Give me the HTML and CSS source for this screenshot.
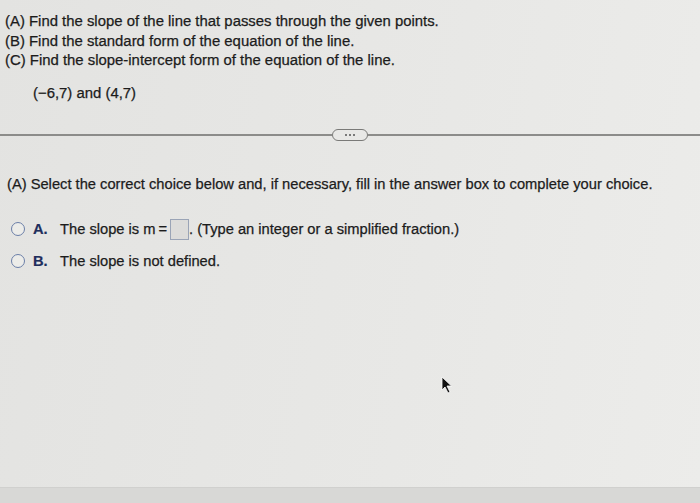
FILE: index.html
```html
<!DOCTYPE html>
<html>
<head>
<meta charset="utf-8">
<link rel="stylesheet" href="styles.css">
</head>
<body>
<div class="page">
  <div class="question">
    <div class="q-line">(A) Find the slope of the line that passes through the given points.</div>
    <div class="q-line">(B) Find the standard form of the equation of the line.</div>
    <div class="q-line">(C) Find the slope-intercept form of the equation of the line.</div>
    <div class="points">(&#8722;6,7) and (4,7)</div>
  </div>
  <div class="divider">
    <span class="rule"></span>
    <span class="pill"><i></i><i></i><i></i></span>
    <span class="rule"></span>
  </div>
  <div class="answer">
    <div class="prompt">(A) Select the correct choice below and, if necessary, fill in the answer box to complete your choice.</div>
    <div class="choices">
      <div class="choice">
        <span class="radio"></span>
        <span class="letter">A.</span>
        <span class="text">The slope is m&#8201;=&#8201;<span class="box"></span>. (Type an integer or a simplified fraction.)</span>
      </div>
      <div class="choice">
        <span class="radio"></span>
        <span class="letter">B.</span>
        <span class="text">The slope is not defined.</span>
      </div>
    </div>
  </div>
  <div class="spacer">
    <svg class="cursor" width="12" height="18" viewBox="0 0 12 18"><path d="M1 1 L1 14 L4 11 L7 17 L9 16 L6 10 L10.5 10 Z" fill="#111" stroke="#fff" stroke-width="0.8"/></svg>
  </div>
  <div class="bottom"></div>
</div>
</body>
</html>
```
FILE: styles.css
```css
html, body {
  margin: 0;
  padding: 0;
}
body {
  width: 700px;
  height: 503px;
  overflow: hidden;
  background: #e5e5e3;
  font-family: "Liberation Sans", Arial, sans-serif;
  color: #1c1c1c;
  -webkit-text-stroke: 0.25px #1c1c1c;
}
.page {
  height: 503px;
  display: flex;
  flex-direction: column;
  background: linear-gradient(100deg, #e3e3e1 0%, #e8e8e6 60%, #ececea 100%);
}
.question {
  padding: 12px 0 0 5px;
  font-size: 14.9px;
  line-height: 19.5px;
}
.points {
  margin: 13px 0 0 28px;
}
.divider {
  margin-top: 26px;
  display: flex;
  align-items: center;
  height: 12px;
}
.rule {
  flex: 1;
  height: 1.5px;
  background: #8c8c8a;
}
.pill {
  width: 34px;
  height: 10px;
  border: 1.5px solid #7a7a78;
  border-radius: 6px;
  display: flex;
  justify-content: center;
  align-items: center;
  gap: 2px;
  background: #e8e8e6;
}
.pill i {
  width: 2px;
  height: 2px;
  background: #555;
  border-radius: 50%;
}
.answer {
  padding: 0 0 0 7px;
  font-size: 14.7px;
}
.prompt {
  margin-top: 34px;
  line-height: 18px;
}
.choices {
  margin-top: 25px;
  display: flex;
  flex-direction: column;
  gap: 10px;
}
.choice {
  display: flex;
  align-items: center;
  height: 22px;
}
.radio {
  width: 12px;
  height: 12px;
  border: 1.5px solid #6b7fa8;
  border-radius: 50%;
  margin-left: 4px;
  background: #ecece9;
}
.letter {
  margin-left: 8px;
  width: 27px;
  font-weight: bold;
  color: #1e2e5c;
  -webkit-text-stroke: 0.2px #1e2e5c;
}
.text {
  display: flex;
  align-items: center;
}
.box {
  display: inline-block;
  width: 17px;
  height: 19px;
  border: 1px solid #9aa4b6;
  background: #dcdcda;
}
.spacer {
  flex: 1;
  position: relative;
}
.cursor {
  position: absolute;
  left: 441px;
  top: 104px;
}
.bottom {
  height: 15px;
  background: #d8d8d6;
  border-top: 1px solid #d0d0ce;
}
```
